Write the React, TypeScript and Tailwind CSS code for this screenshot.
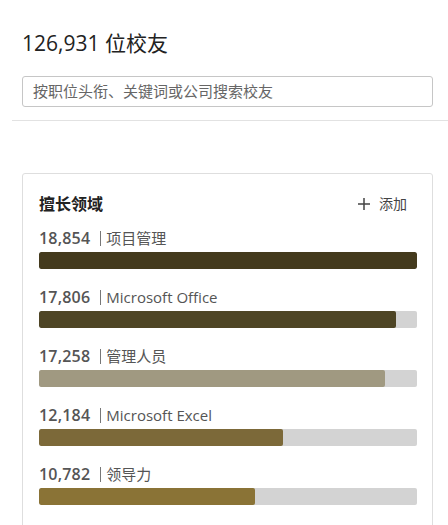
import React from "react";

const font = { fontFamily: '"Open Sans", "Noto Sans CJK SC", sans-serif' };

const rows = [
  { n: "18,854", label: "项目管理", pct: 100, color: "bg-[#443a1d]" },
  { n: "17,806", label: "Microsoft Office", pct: 94.4, color: "bg-[#4e4525]" },
  { n: "17,258", label: "管理人员", pct: 91.5, color: "bg-[#a09981]" },
  { n: "12,184", label: "Microsoft Excel", pct: 64.6, color: "bg-[#7c6939]" },
  { n: "10,782", label: "领导力", pct: 57.1, color: "bg-[#8a7336]" },
];

export default function App() {
  return (
    <div className="w-[448px] h-[525px] overflow-hidden bg-white" style={font}>
      <div className="pl-[22px] pt-[28px] text-[21px] leading-[30px] text-[#222]">126,931 位校友</div>
      <div className="ml-[22px] mt-[18px] w-[411px] h-[31px] border border-[#c6c6c6] rounded-[3px] flex items-center pl-[10px] text-[15px] text-[#666]">
        按职位头衔、关键词或公司搜索校友
      </div>
      <div className="ml-[12px] mt-[13px] border-t border-[#e2e2e2]" />
      <div className="ml-[22px] mt-[52px] w-[411px] h-[400px] border border-[#dedede] rounded-[3px] pl-[16px] pr-[15px]">
        <div className="flex items-center justify-between pt-[14px] h-[45px]">
          <div className="text-[16px] font-bold text-[#222] leading-[22px]">擅长领域</div>
          <div className="flex items-center gap-[9px] text-[14px] text-[#444] pr-[10px] leading-[22px]">
            <svg width="12" height="12" viewBox="0 0 12 12"><path d="M6 0v12M0 6h12" stroke="#444" strokeWidth="1.5" /></svg>
            <span>添加</span>
          </div>
        </div>
        <div className="flex flex-col">
          {rows.map((r, i) => (
            <div key={i} className={i === 0 ? "mt-[10px]" : "mt-[19px]"}>
              <div className="flex items-center h-[18px] text-[15px] text-[#555] leading-[18px]">
                <span className="font-semibold text-[16px] tracking-[0.2px]">{r.n}</span>
                <span className="ml-[10px] mr-[5px] w-px h-[15px] bg-[#777]" />
                <span>{r.label}</span>
              </div>
              <div className="mt-[5px] h-[17px] w-full rounded-[2px] bg-[#d3d3d3] overflow-hidden">
                <div className={`h-full rounded-[2px] ${r.color}`} style={{ width: `${r.pct}%` }} />
              </div>
            </div>
          ))}
        </div>
      </div>
    </div>
  );
}
